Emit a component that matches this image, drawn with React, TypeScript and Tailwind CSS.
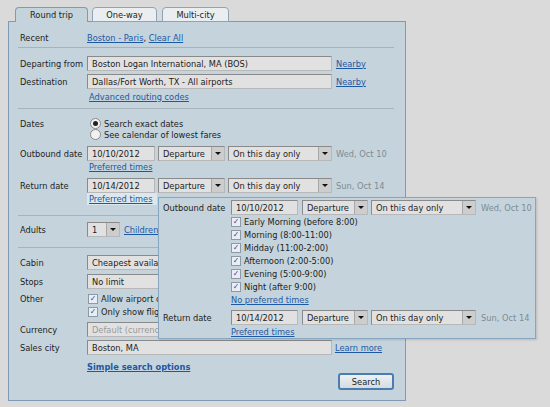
import React from "react";

type P = { children?: React.ReactNode; className?: string };

function Lnk({ children, className = "" }: P) {
  return (
    <a href="#" className={`text-[#1d58a3] underline ${className}`}>
      {children}
    </a>
  );
}

function Field({ value, className = "" }: { value: string; className?: string }) {
  return (
    <div
      className={`flex h-[15px] items-center overflow-hidden whitespace-nowrap border border-[#8a8a8a] border-r-[#b8b8b8] border-b-[#b8b8b8] bg-[#e1e1e1] pl-[4px] ${className}`}
    >
      {value}
    </div>
  );
}

function Sel({ value, className = "", muted = false }: { value: string; className?: string; muted?: boolean }) {
  return (
    <div className={`flex h-[15px] border border-[#8a8a8a] border-r-[#b8b8b8] border-b-[#b8b8b8] bg-[#e1e1e1] ${className}`}>
      <div
        className={`flex flex-1 items-center overflow-hidden whitespace-nowrap pl-[4px] ${muted ? "text-[#9a9a9a]" : ""}`}
      >
        {value}
      </div>
      <div className="flex w-[13px] items-center justify-center border-l border-[#a8a8a8] bg-[#cdcdcd]">
        <div className="h-0 w-0 border-t-[3px] border-r-[3px] border-l-[3px] border-t-[#111] border-r-transparent border-l-transparent" />
      </div>
    </div>
  );
}

function Check({ label, className = "h-[13px]" }: { label: string; className?: string }) {
  return (
    <div className={`flex items-center gap-[3px] whitespace-nowrap ${className}`}>
      <div className="flex h-[10px] w-[10px] shrink-0 items-center justify-center border border-[#8d9aa6] bg-[#e9eef4] text-[8px] leading-none font-bold text-[#27358a]">
        ✓
      </div>
      {label}
    </div>
  );
}

function Radio({ label, on = false }: { label: string; on?: boolean }) {
  return (
    <div className="flex h-[11px] items-center gap-[3px] whitespace-nowrap">
      <div className="flex h-[11px] w-[11px] items-center justify-center rounded-full border border-[#8a8a8a] bg-[#f1f1f1]">
        {on && <div className="h-[5px] w-[5px] rounded-full bg-[#222]" />}
      </div>
      {label}
    </div>
  );
}

function Sep({ className = "" }: P) {
  return <div className={`h-px bg-[#a6b3ba] ${className}`} />;
}

function Row({ label, children, className = "" }: P & { label: string }) {
  return (
    <div className={`flex items-center ${className}`}>
      <div className="w-[69px] shrink-0 pl-[2px] whitespace-nowrap">{label}</div>
      {children}
    </div>
  );
}

function DateRow({ label, date, day, pop = false }: { label: string; date: string; day: string; pop?: boolean }) {
  return (
    <div className="flex h-[15px] items-center">
      <div className={`shrink-0 whitespace-nowrap ${pop ? "w-[68px]" : "w-[69px] pl-[2px]"}`}>{label}</div>
      <Field value={date} className={pop ? "w-[67px]" : "w-[68px]"} />
      <Sel value="Departure" className={pop ? "ml-[4px] w-[66px]" : "ml-[3px] w-[67px]"} />
      <Sel value="On this day only" className={pop ? "ml-[3px] w-[105px]" : "ml-[3px] w-[104px]"} />
      <span className={`whitespace-nowrap text-[#7e8b93] ${pop ? "ml-[5px]" : "ml-[4px]"}`}>{day}</span>
    </div>
  );
}

export default function App() {
  return (
    <div className="relative h-[407px] w-[550px] overflow-hidden bg-[#dadada] pt-[7px] font-['DejaVu_Sans_Condensed','DejaVu_Sans',sans-serif] text-[9.2px] text-[#222]">
      {/* tabs */}
      <div className="flex h-[15px] pl-[15px]">
        <div className="relative z-10 flex h-[15px] w-[73px] items-center justify-center rounded-t-[4px] border border-b-0 border-[#7d9bb6] bg-[#c5d4dc]">
          Round trip
        </div>
        <div className="ml-[4px] flex h-[15px] w-[65px] items-center justify-center rounded-t-[4px] border border-[#8aa4bb] bg-[#eaeef1]">
          One-way
        </div>
        <div className="ml-[5px] flex h-[15px] w-[67px] items-center justify-center rounded-t-[4px] border border-[#8aa4bb] bg-[#eaeef1]">
          Multi-city
        </div>
      </div>

      {/* main panel */}
      <div className="-mt-px ml-[8px] h-[380px] w-[398px] border border-[#7d9bb6] bg-[#c5d4dc] pr-[11px] pl-[9px]">
        <Row label="Recent" className="mt-[9px] h-[14px]">
          <span>
            <Lnk>Boston - Paris</Lnk>, <Lnk>Clear All</Lnk>
          </span>
        </Row>
        <Sep className="mt-[2px]" />

        <Row label="Departing from" className="mt-[8px] h-[15px]">
          <Field value="Boston Logan International, MA (BOS)" className="w-[245px]" />
          <Lnk className="ml-[4px]">Nearby</Lnk>
        </Row>
        <Row label="Destination" className="mt-[3px] h-[15px]">
          <Field value="Dallas/Fort Worth, TX - All airports" className="w-[245px]" />
          <Lnk className="ml-[4px]">Nearby</Lnk>
        </Row>
        <div className="mt-[1px] flex h-[13px] items-center pl-[71px]">
          <Lnk>Advanced routing codes</Lnk>
        </div>
        <Sep className="mt-[5px]" />

        <div className="mt-[9px] flex">
          <div className="w-[71px] shrink-0 pl-[2px] leading-[11px]">Dates</div>
          <div className="flex flex-col pl-[1px]">
            <Radio label="Search exact dates" on />
            <Radio label="See calendar of lowest fares" />
          </div>
        </div>

        <div className="mt-[6px]">
          <DateRow label="Outbound date" date="10/10/2012" day="Wed, Oct 10" />
        </div>
        <div className="flex h-[11px] items-center pl-[71px]">
          <Lnk>Preferred times</Lnk>
        </div>
        <div className="mt-[6px]">
          <DateRow label="Return date" date="10/14/2012" day="Sun, Oct 14" />
        </div>
        <div className="flex h-[12px] items-center pl-[69px]">
          <Lnk className="flex h-[12px] w-[70px] items-center bg-[#dce8ef] pl-[2px]">Preferred times</Lnk>
        </div>
        <Sep className="mt-[10px]" />

        <Row label="Adults" className="mt-[6px] h-[15px]">
          <Sel value="1" className="w-[33px]" />
          <Lnk className="ml-[4px]">Children</Lnk>
        </Row>
        <Sep className="mt-[10px]" />

        <Row label="Cabin" className="mt-[7px] h-[15px]">
          <Sel value="Cheapest available" className="w-[245px]" />
        </Row>
        <Row label="Stops" className="mt-[4px] h-[15px]">
          <Sel value="No limit" className="w-[245px]" />
        </Row>
        <div className="mt-[3px] flex">
          <div className="w-[69px] shrink-0 pl-[2px] leading-[13px]">Other</div>
          <div className="flex flex-col pl-[1px]">
            <Check label="Allow airport c" />
            <Check label="Only show flig" />
          </div>
        </div>
        <Row label="Currency" className="mt-[4px] h-[15px]">
          <Sel value="Default (currency)" className="w-[245px]" muted />
        </Row>
        <Row label="Sales city" className="mt-[3px] h-[15px]">
          <Field value="Boston, MA" className="w-[245px]" />
          <Lnk className="ml-[3px]">Learn more</Lnk>
        </Row>
        <div className="mt-[6px] flex h-[12px] items-center pl-[69px]">
          <Lnk className="font-bold">Simple search options</Lnk>
        </div>
        <div className="flex justify-end">
          <button className="h-[17px] w-[56px] rounded-[3px] border-2 border-[#4b7db0] bg-linear-to-b from-[#eef1f4] to-[#d5dce1] text-[9.2px] text-[#222]">
            Search
          </button>
        </div>
      </div>

      {/* preferred times popup */}
      <div className="absolute top-[197px] left-[158px] h-[142px] w-[378px] border border-[#86a6c1] bg-[#c5d4dc] pl-[4px] shadow-[1px_1px_2px_rgba(0,0,0,0.15)]">
        <div className="mt-[2px]">
          <DateRow label="Outbound date" date="10/10/2012" day="Wed, Oct 10" pop />
        </div>
        <div className="pl-[68px]">
          <Check label="Early Morning (before 8:00)" />
          <Check label="Morning (8:00-11:00)" />
          <Check label="Midday (11:00-2:00)" />
          <Check label="Afternoon (2:00-5:00)" />
          <Check label="Evening (5:00-9:00)" />
          <Check label="Night (after 9:00)" />
          <div className="flex h-[13px] items-center">
            <Lnk>No preferred times</Lnk>
          </div>
        </div>
        <div className="mt-[4px]">
          <DateRow label="Return date" date="10/14/2012" day="Sun, Oct 14" pop />
        </div>
        <div className="flex h-[13px] items-center pl-[68px]">
          <Lnk>Preferred times</Lnk>
        </div>
      </div>
    </div>
  );
}
